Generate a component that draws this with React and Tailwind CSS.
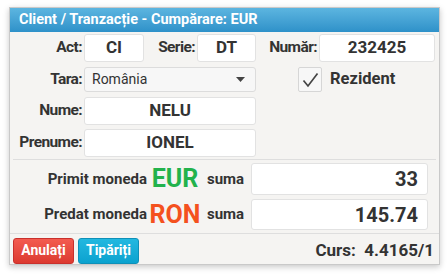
import React from "react";

const F = { fontFamily: "Roboto, 'Liberation Sans', sans-serif" };

function Label({ children, w }) {
  return (
    <div className={`${w} shrink-0 text-right pr-[2px] text-[15.5px] tracking-[-0.6px] font-bold text-[#333]`}>{children}</div>
  );
}

function Input({ w, h = "h-[28px]", children, cls = "justify-center text-[17px]" }) {
  return (
    <div className={`${w} ${h} shrink-0 bg-white border border-[#e2e2e2] rounded-[3px] flex items-center font-bold text-[#333] ${cls}`}>
      {children}
    </div>
  );
}

export default function App() {
  return (
    <div className="w-[448px] h-[276px] bg-white pt-[7px] pl-[9px]" style={F}>
      <div className="w-[431px] h-[258px] border border-[#c9c9c9] bg-[#f5f4f2] shadow-[0_2px_6px_rgba(0,0,0,0.22)] flex flex-col">
        <div className="h-[24px] shrink-0 bg-gradient-to-b from-[#5cb5e0] to-[#2e91c9] text-white font-bold text-[14.5px] pl-[9px] flex items-center">
          Client / Tranzacție - Cumpărare: EUR
        </div>
        {/* row 1 */}
        <div className="flex items-center mt-[2px] h-[28px]">
          <Label w="w-[74px]">Act:</Label>
          <Input w="w-[60px]">CI</Input>
          <Label w="w-[53px]">Serie:</Label>
          <Input w="w-[59px]">DT</Input>
          <Label w="w-[63px]">Număr:</Label>
          <Input w="w-[116px]">232425</Input>
        </div>
        {/* row 2 */}
        <div className="flex items-center mt-[5px] h-[25px]">
          <Label w="w-[74px]">Tara:</Label>
          <div className="w-[172px] h-[25px] shrink-0 bg-[#f7f7f7] border border-[#dcdcdc] rounded-[3px] flex items-center justify-between pl-[7px] pr-[10px] text-[14px] text-[#333]">
            <span>România</span>
            <svg width="9" height="5" viewBox="0 0 9 5"><path d="M0 0h9L4.5 5z" fill="#444" /></svg>
          </div>
          <div className="ml-[42px] w-[24px] h-[25px] shrink-0 bg-[#f7f7f7] border border-[#d6d6d6] rounded-[2px] flex items-center justify-center">
            <svg width="17" height="16" viewBox="0 0 17 16"><path d="M1.5 8.5 L6 14 L15.5 1.5" fill="none" stroke="#444" strokeWidth="1.7" /></svg>
          </div>
          <div className="ml-[8px] text-[16.5px] font-bold text-[#333]">Rezident</div>
        </div>
        {/* row 3 */}
        <div className="flex items-center mt-[5px] h-[28px]">
          <Label w="w-[74px]">Nume:</Label>
          <Input w="w-[172px]">NELU</Input>
        </div>
        {/* row 4 */}
        <div className="flex items-center mt-[4px] h-[28px]">
          <Label w="w-[74px]">Prenume:</Label>
          <Input w="w-[172px]">IONEL</Input>
        </div>
        <div className="mx-[3px] mt-[2px] border-t border-[#dedede]" />
        {/* row 5 */}
        <div className="flex items-center mt-[3px] h-[32px]">
          <div className="w-[137px] shrink-0 text-right text-[15px] font-bold text-[#333]">Primit moneda</div>
          <div className="w-[56px] shrink-0 text-center text-[25px] font-bold text-[#22b24c]">EUR</div>
          <div className="w-[48px] shrink-0 pl-[4px] text-[15px] font-bold text-[#333]">suma</div>
          <Input w="w-[177px]" h="h-[32px]" cls="justify-end pr-[9px] text-[20px]">33</Input>
        </div>
        {/* row 6 */}
        <div className="flex items-center mt-[4px] h-[31px]">
          <div className="w-[137px] shrink-0 text-right text-[15px] font-bold text-[#333]">Predat moneda</div>
          <div className="w-[56px] shrink-0 text-center text-[25px] font-bold text-[#f4511e]">RON</div>
          <div className="w-[48px] shrink-0 pl-[4px] text-[15px] font-bold text-[#333]">suma</div>
          <Input w="w-[177px]" h="h-[31px]" cls="justify-end pr-[9px] text-[20px]">145.74</Input>
        </div>
        <div className="mt-[3px] border-t border-[#dedede]" />
        {/* footer */}
        <div className="flex items-center mt-[3px] h-[27px] pl-[3px] pr-[5px]">
          <button className="w-[61px] h-[26px] rounded-[3px] border border-[#c9302c] bg-gradient-to-b from-[#f35b50] to-[#dc3a30] text-white text-[14px] font-bold">Anulați</button>
          <button className="ml-[4px] w-[61px] h-[26px] rounded-[3px] border border-[#0e90b8] bg-gradient-to-b from-[#22b8e0] to-[#0aa2cf] text-white text-[14px] font-bold">Tipăriți</button>
          <div className="ml-auto text-[17px] font-bold text-[#333]">Curs:&nbsp; 4.4165/1</div>
        </div>
      </div>
    </div>
  );
}
